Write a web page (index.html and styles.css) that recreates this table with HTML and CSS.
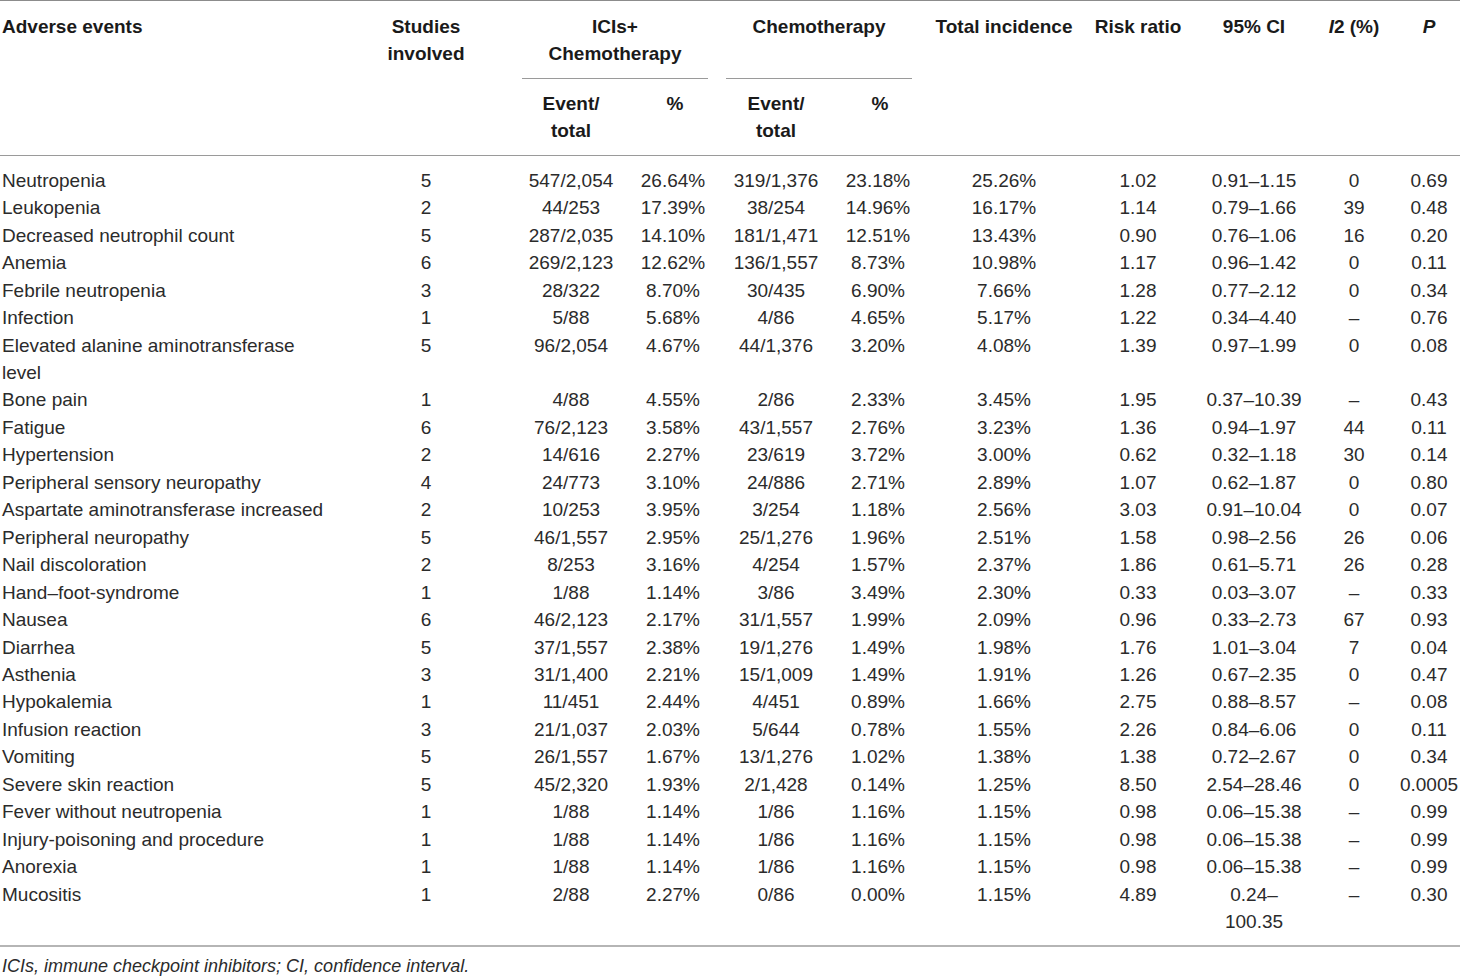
FILE: index.html
```html
<!DOCTYPE html>
<html lang="en">
<head>
<meta charset="utf-8">
<title>Adverse events table</title>
<link rel="stylesheet" href="styles.css">
</head>
<body>
<table class="ae">
  <colgroup>
    <col class="c-name"><col class="c-stud"><col class="c-ev1"><col class="c-p1"><col class="c-ev2"><col class="c-p2"><col class="c-tot"><col class="c-rr"><col class="c-ci"><col class="c-i2"><col class="c-p">
  </colgroup>
  <thead>
    <tr class="h1">
      <th rowspan="2" class="left">Adverse events</th>
      <th rowspan="2">Studies<br>involved</th>
      <th colspan="2" class="grp"><div class="grp-in">ICIs+<br>Chemotherapy</div></th>
      <th colspan="2" class="grp"><div class="grp-in">Chemotherapy<br>&nbsp;</div></th>
      <th rowspan="2">Total incidence</th>
      <th rowspan="2">Risk ratio</th>
      <th rowspan="2">95% CI</th>
      <th rowspan="2"><i>I</i>2 (%)</th>
      <th rowspan="2"><i>P</i></th>
    </tr>
    <tr class="h2">
      <th>Event/<br>total</th>
      <th class="pct">%</th>
      <th>Event/<br>total</th>
      <th class="pct">%</th>
    </tr>
  </thead>
  <tbody>
    <tr><td class="left">Neutropenia</td><td>5</td><td>547/2,054</td><td>26.64%</td><td>319/1,376</td><td>23.18%</td><td>25.26%</td><td>1.02</td><td>0.91–1.15</td><td>0</td><td>0.69</td></tr>
    <tr><td class="left">Leukopenia</td><td>2</td><td>44/253</td><td>17.39%</td><td>38/254</td><td>14.96%</td><td>16.17%</td><td>1.14</td><td>0.79–1.66</td><td>39</td><td>0.48</td></tr>
    <tr><td class="left">Decreased neutrophil count</td><td>5</td><td>287/2,035</td><td>14.10%</td><td>181/1,471</td><td>12.51%</td><td>13.43%</td><td>0.90</td><td>0.76–1.06</td><td>16</td><td>0.20</td></tr>
    <tr><td class="left">Anemia</td><td>6</td><td>269/2,123</td><td>12.62%</td><td>136/1,557</td><td>8.73%</td><td>10.98%</td><td>1.17</td><td>0.96–1.42</td><td>0</td><td>0.11</td></tr>
    <tr><td class="left">Febrile neutropenia</td><td>3</td><td>28/322</td><td>8.70%</td><td>30/435</td><td>6.90%</td><td>7.66%</td><td>1.28</td><td>0.77–2.12</td><td>0</td><td>0.34</td></tr>
    <tr><td class="left">Infection</td><td>1</td><td>5/88</td><td>5.68%</td><td>4/86</td><td>4.65%</td><td>5.17%</td><td>1.22</td><td>0.34–4.40</td><td>–</td><td>0.76</td></tr>
    <tr><td class="left">Elevated alanine aminotransferase<br>level</td><td>5</td><td>96/2,054</td><td>4.67%</td><td>44/1,376</td><td>3.20%</td><td>4.08%</td><td>1.39</td><td>0.97–1.99</td><td>0</td><td>0.08</td></tr>
    <tr><td class="left">Bone pain</td><td>1</td><td>4/88</td><td>4.55%</td><td>2/86</td><td>2.33%</td><td>3.45%</td><td>1.95</td><td>0.37–10.39</td><td>–</td><td>0.43</td></tr>
    <tr><td class="left">Fatigue</td><td>6</td><td>76/2,123</td><td>3.58%</td><td>43/1,557</td><td>2.76%</td><td>3.23%</td><td>1.36</td><td>0.94–1.97</td><td>44</td><td>0.11</td></tr>
    <tr><td class="left">Hypertension</td><td>2</td><td>14/616</td><td>2.27%</td><td>23/619</td><td>3.72%</td><td>3.00%</td><td>0.62</td><td>0.32–1.18</td><td>30</td><td>0.14</td></tr>
    <tr><td class="left">Peripheral sensory neuropathy</td><td>4</td><td>24/773</td><td>3.10%</td><td>24/886</td><td>2.71%</td><td>2.89%</td><td>1.07</td><td>0.62–1.87</td><td>0</td><td>0.80</td></tr>
    <tr><td class="left">Aspartate aminotransferase increased</td><td>2</td><td>10/253</td><td>3.95%</td><td>3/254</td><td>1.18%</td><td>2.56%</td><td>3.03</td><td>0.91–10.04</td><td>0</td><td>0.07</td></tr>
    <tr><td class="left">Peripheral neuropathy</td><td>5</td><td>46/1,557</td><td>2.95%</td><td>25/1,276</td><td>1.96%</td><td>2.51%</td><td>1.58</td><td>0.98–2.56</td><td>26</td><td>0.06</td></tr>
    <tr><td class="left">Nail discoloration</td><td>2</td><td>8/253</td><td>3.16%</td><td>4/254</td><td>1.57%</td><td>2.37%</td><td>1.86</td><td>0.61–5.71</td><td>26</td><td>0.28</td></tr>
    <tr><td class="left">Hand–foot-syndrome</td><td>1</td><td>1/88</td><td>1.14%</td><td>3/86</td><td>3.49%</td><td>2.30%</td><td>0.33</td><td>0.03–3.07</td><td>–</td><td>0.33</td></tr>
    <tr><td class="left">Nausea</td><td>6</td><td>46/2,123</td><td>2.17%</td><td>31/1,557</td><td>1.99%</td><td>2.09%</td><td>0.96</td><td>0.33–2.73</td><td>67</td><td>0.93</td></tr>
    <tr><td class="left">Diarrhea</td><td>5</td><td>37/1,557</td><td>2.38%</td><td>19/1,276</td><td>1.49%</td><td>1.98%</td><td>1.76</td><td>1.01–3.04</td><td>7</td><td>0.04</td></tr>
    <tr><td class="left">Asthenia</td><td>3</td><td>31/1,400</td><td>2.21%</td><td>15/1,009</td><td>1.49%</td><td>1.91%</td><td>1.26</td><td>0.67–2.35</td><td>0</td><td>0.47</td></tr>
    <tr><td class="left">Hypokalemia</td><td>1</td><td>11/451</td><td>2.44%</td><td>4/451</td><td>0.89%</td><td>1.66%</td><td>2.75</td><td>0.88–8.57</td><td>–</td><td>0.08</td></tr>
    <tr><td class="left">Infusion reaction</td><td>3</td><td>21/1,037</td><td>2.03%</td><td>5/644</td><td>0.78%</td><td>1.55%</td><td>2.26</td><td>0.84–6.06</td><td>0</td><td>0.11</td></tr>
    <tr><td class="left">Vomiting</td><td>5</td><td>26/1,557</td><td>1.67%</td><td>13/1,276</td><td>1.02%</td><td>1.38%</td><td>1.38</td><td>0.72–2.67</td><td>0</td><td>0.34</td></tr>
    <tr><td class="left">Severe skin reaction</td><td>5</td><td>45/2,320</td><td>1.93%</td><td>2/1,428</td><td>0.14%</td><td>1.25%</td><td>8.50</td><td>2.54–28.46</td><td>0</td><td>0.0005</td></tr>
    <tr><td class="left">Fever without neutropenia</td><td>1</td><td>1/88</td><td>1.14%</td><td>1/86</td><td>1.16%</td><td>1.15%</td><td>0.98</td><td>0.06–15.38</td><td>–</td><td>0.99</td></tr>
    <tr><td class="left">Injury-poisoning and procedure</td><td>1</td><td>1/88</td><td>1.14%</td><td>1/86</td><td>1.16%</td><td>1.15%</td><td>0.98</td><td>0.06–15.38</td><td>–</td><td>0.99</td></tr>
    <tr><td class="left">Anorexia</td><td>1</td><td>1/88</td><td>1.14%</td><td>1/86</td><td>1.16%</td><td>1.15%</td><td>0.98</td><td>0.06–15.38</td><td>–</td><td>0.99</td></tr>
    <tr><td class="left">Mucositis</td><td>1</td><td>2/88</td><td>2.27%</td><td>0/86</td><td>0.00%</td><td>1.15%</td><td>4.89</td><td>0.24–<br>100.35</td><td>–</td><td>0.30</td></tr>
  </tbody>
</table>
<p class="note"><i>ICIs, immune checkpoint inhibitors; CI, confidence interval.</i></p>
</body>
</html>
```
FILE: styles.css
```css
html, body {
  margin: 0;
  padding: 0;
  background: #ffffff;
}
body {
  font-family: "Liberation Sans", Arial, sans-serif;
  font-size: 19px;
  line-height: 27.45px;
  color: #2b2b2b;
}
.ae {
  width: 1460px;
  border-collapse: collapse;
  table-layout: fixed;
  border-top: 1px solid #8c8c8c;
}
.c-name { width: 330px; }
.c-stud { width: 192px; }
.c-ev1 { width: 98px; }
.c-p1 { width: 106px; }
.c-ev2 { width: 100px; }
.c-p2 { width: 104px; }
.c-tot { width: 148px; }
.c-rr { width: 120px; }
.c-ci { width: 112px; }
.c-i2 { width: 88px; }
.c-p { width: 62px; }

.ae th, .ae td {
  padding: 0;
  text-align: center;
  vertical-align: top;
  white-space: nowrap;
  font-weight: normal;
}
.ae th {
  font-weight: bold;
  color: #1a1a1a;
}
.ae .left {
  text-align: left;
  padding-left: 2px;
}
.ae thead tr.h1 th {
  padding-top: 12px;
  padding-bottom: 0;
}
.grp-in {
  margin-right: 18px;
  padding-bottom: 10px;
  border-bottom: 1px solid #9a9a9a;
}
.ae thead tr.h2 th {
  padding-top: 11px;
  padding-bottom: 10px;
}
.ae thead tr.h2 th.pct {
  padding-left: 4px;
}
.ae thead {
  border-bottom: 1px solid #9a9a9a;
}
.ae tbody tr:first-child td {
  padding-top: 11px;
}
.ae tbody tr:last-child td {
  padding-bottom: 9px;
}
.ae tbody {
  border-bottom: 2px solid #b5b5b5;
}
.note {
  margin: 6px 0 0 2px;
  font-size: 18px;
  line-height: 27px;
  color: #2b2b2b;
}
```
